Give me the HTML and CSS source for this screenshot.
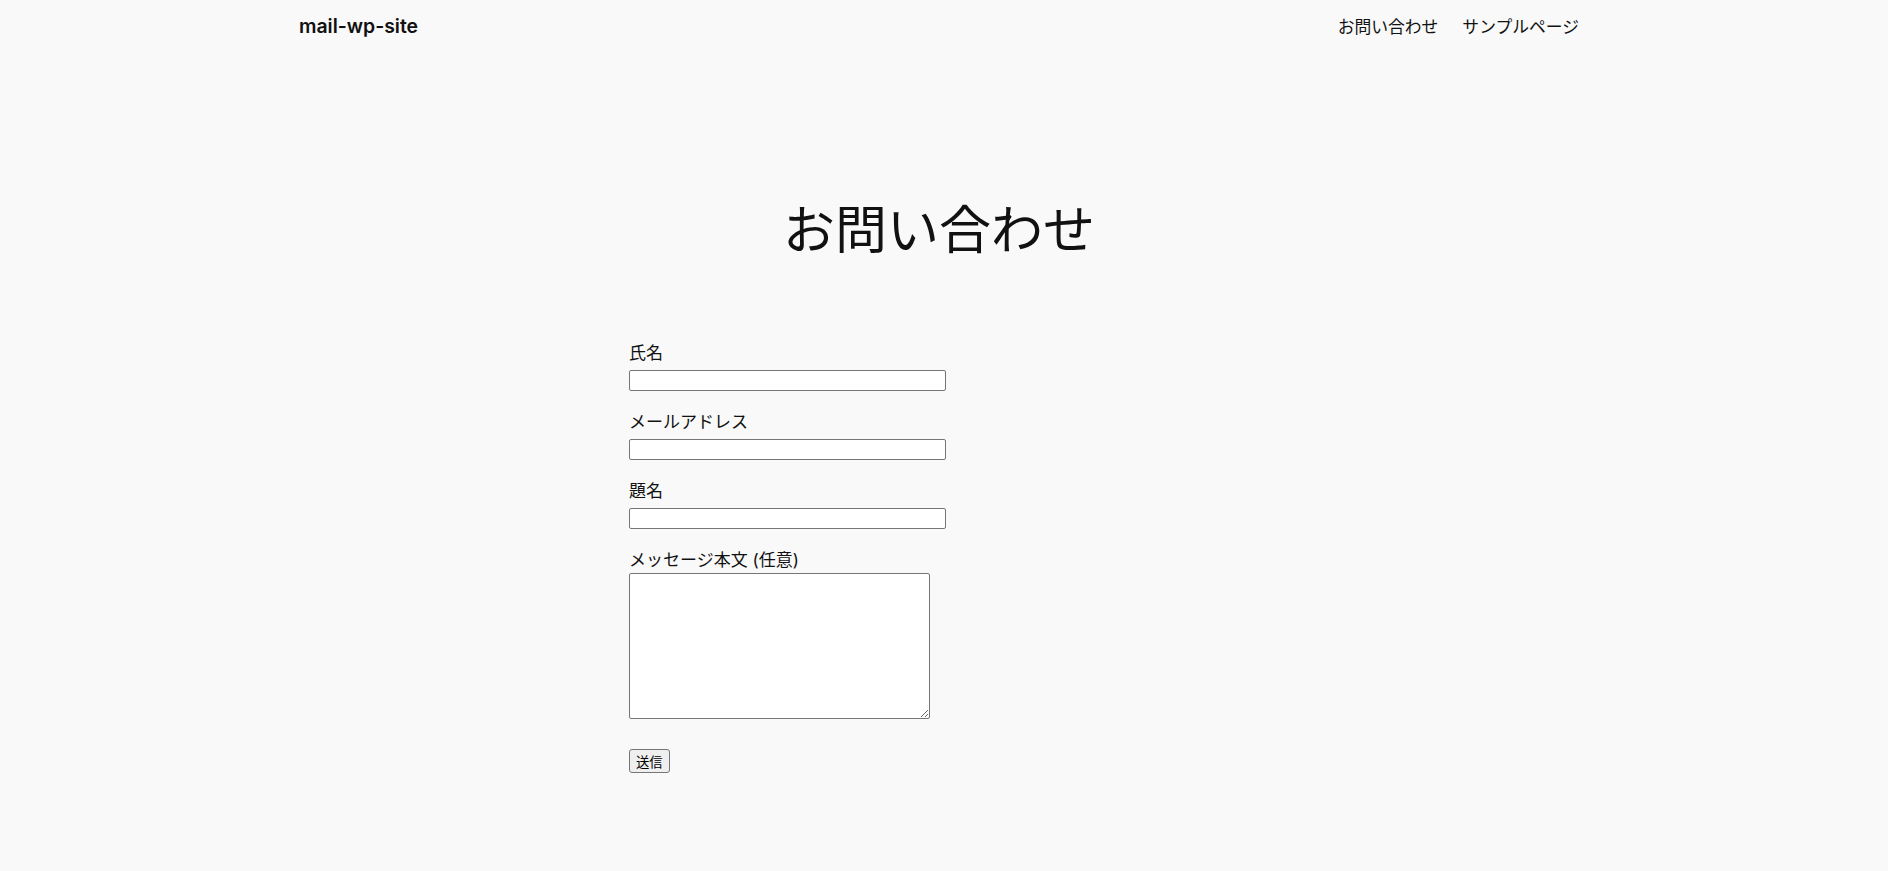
FILE: index.html
```html
<!DOCTYPE html>
<html lang="ja">
<head>
  <meta charset="UTF-8" />
  <meta name="viewport" content="width=device-width, initial-scale=1.0"/>
  <title>お問い合わせ – mail-wp-site</title>
  <link rel="stylesheet" href="styles.css">
</head>
<body>

  <header class="site-header">
    <a class="site-title" href="#">mail-wp-site</a>
    <nav class="site-nav">
      <a href="#">お問い合わせ</a>
      <a href="#">サンプルページ</a>
    </nav>
  </header>

  <main class="site-main">
    <h1 class="page-title">お問い合わせ</h1>

    <form class="contact-form" action="#" method="post">
      <div class="field">
        <label for="your-name">氏名</label>
        <input type="text" id="your-name" name="your-name">
      </div>
      <div class="field">
        <label for="your-email">メールアドレス</label>
        <input type="email" id="your-email" name="your-email">
      </div>
      <div class="field">
        <label for="your-subject">題名</label>
        <input type="text" id="your-subject" name="your-subject">
      </div>
      <div class="field">
        <label for="your-message">メッセージ本文 (任意)</label>
        <textarea id="your-message" name="your-message"></textarea>
      </div>
      <div class="actions">
        <button type="submit">送信</button>
      </div>
    </form>
  </main>

</body>
</html>
```

FILE: styles.css
```css
body {
  margin: 0;
  padding: 0 10px 0 0;
  background: #f9f9f9;
  color: #111111;
  font-family: Inter, "Noto Sans CJK JP", sans-serif;
  font-size: 17px;
}

a {
  color: inherit;
  text-decoration: none;
}

/* header */
.site-header {
  max-width: 1280px;
  height: 52px;
  margin: 0 auto;
  display: flex;
  justify-content: space-between;
  align-items: center;
}

.site-title {
  font-size: 19.4px;
  font-weight: 600;
}

.site-nav {
  display: flex;
  gap: 24px;
  font-size: 16.8px;
}

/* page */
.page-title {
  margin: 148px 0 0;
  text-align: center;
  font-size: 52px;
  font-weight: 400;
  line-height: 1.2;
}

.contact-form {
  width: 620px;
  margin: 77px auto 0;
}

.field {
  margin-bottom: 17px;
}

.field label {
  display: block;
  line-height: 27px;
  padding-top: 1px;
  margin-bottom: -1px;
}

.field input {
  display: block;
  box-sizing: border-box;
  width: 317px;
  height: 21px;
  margin-top: 4px;
  border: 1px solid #767676;
  border-radius: 2px;
  background: #fff;
}

.field textarea {
  display: block;
  box-sizing: border-box;
  width: 301px;
  height: 146px;
  border: 1px solid #767676;
  border-radius: 2px;
  background: #fff;
}

.actions {
  padding-top: 13px;
}

button {
  box-sizing: border-box;
  height: 24px;
  font-family: "Noto Sans CJK JP", sans-serif;
  font-size: 13.33px;
  padding: 1px 6px;
  border: 1px solid #767676;
  border-radius: 3px;
  background: #efefef;
  color: #000;
}
```
